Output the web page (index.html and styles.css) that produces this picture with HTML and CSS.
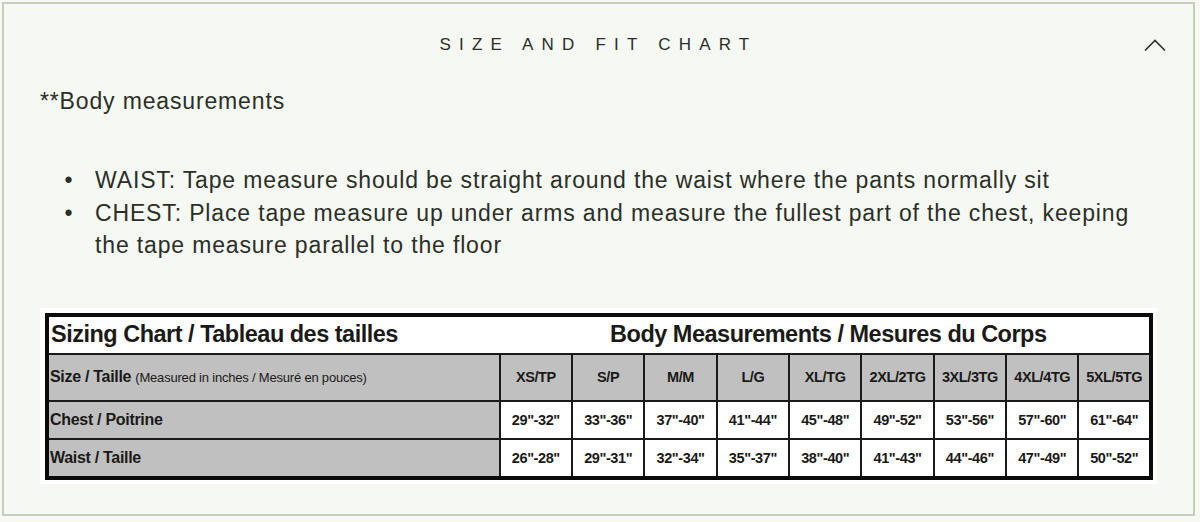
FILE: index.html
```html
<!DOCTYPE html>
<html lang="en">
<head>
<meta charset="utf-8">
<title>Size and fit chart</title>
<link rel="stylesheet" href="styles.css">
</head>
<body>
<section class="panel">
  <header class="panel-head">
    <h2 class="panel-title">SIZE AND FIT CHART</h2>
    <svg class="chevron" width="22" height="12" viewBox="0 0 22 12" aria-hidden="true">
      <path d="M1 11.5 L11 1.5 L21 11.5" fill="none" stroke="#2f332b" stroke-width="1.6"/>
    </svg>
  </header>
  <div class="panel-body">
    <p class="lead">**Body measurements</p>
    <ul class="notes">
      <li>WAIST: Tape measure should be straight around the waist where the pants normally sit</li>
      <li>CHEST: Place tape measure up under arms and measure the fullest part of the chest, keeping the tape measure parallel to the floor</li>
    </ul>
    <div class="chart">
      <table class="sizes">
        <colgroup>
          <col class="c-label">
          <col class="c-size"><col class="c-size"><col class="c-size"><col class="c-size"><col class="c-size"><col class="c-size"><col class="c-size"><col class="c-size"><col class="c-size">
        </colgroup>
        <tr class="r-title">
          <td class="t-left">Sizing Chart / Tableau des tailles</td>
          <td colspan="9" class="t-center">Body Measurements / Mesures du Corps</td>
        </tr>
        <tr class="r-head">
          <td class="lbl"><b>Size / Taille</b> <span class="small">(Measured in inches / Mesuré en pouces)</span></td>
          <td>XS/TP</td><td>S/P</td><td>M/M</td><td>L/G</td><td>XL/TG</td><td>2XL/2TG</td><td>3XL/3TG</td><td>4XL/4TG</td><td>5XL/5TG</td>
        </tr>
        <tr class="r-val">
          <td class="lbl">Chest / Poitrine</td>
          <td>29"-32"</td><td>33"-36"</td><td>37"-40"</td><td>41"-44"</td><td>45"-48"</td><td>49"-52"</td><td>53"-56"</td><td>57"-60"</td><td>61"-64"</td>
        </tr>
        <tr class="r-val r-last">
          <td class="lbl">Waist / Taille</td>
          <td>26"-28"</td><td>29"-31"</td><td>32"-34"</td><td>35"-37"</td><td>38"-40"</td><td>41"-43"</td><td>44"-46"</td><td>47"-49"</td><td>50"-52"</td>
        </tr>
      </table>
    </div>
  </div>
</section>
</body>
</html>
```
FILE: styles.css
```css
html, body {
  margin: 0;
  padding: 0;
  background: #f7f8f4;
}
body {
  padding: 2px 5px 0 2px;
  font-family: "Liberation Sans", Arial, sans-serif;
  color: #2b2f27;
}
.panel {
  border: 2px solid #c6cdbb;
  background: #f6f8f3;
  height: 514px;
  box-sizing: border-box;
}
.panel-head {
  height: 81px;
  display: flex;
  align-items: center;
  justify-content: center;
  position: relative;
}
.panel-title {
  margin: 0;
  font-weight: normal;
  font-size: 17px;
  letter-spacing: 8.2px;
  color: #2b2f27;
}
.chevron {
  position: absolute;
  right: 27px;
  top: 35px;
}
.panel-body {
  padding: 0 36px 0 36px;
}
.lead {
  margin: 0;
  font-size: 23px;
  line-height: 32px;
  letter-spacing: 0.85px;
}
.notes {
  margin: 47px 0 0 0;
  padding-left: 55px;
  font-size: 23px;
  line-height: 32.5px;
  letter-spacing: 0.85px;
}
.notes li::marker {
  content: "\2022\00a0\00a0\00a0";
  font-size: 23px;
}
.chart {
  margin-top: 46px;
  width: 1117px;
  box-sizing: border-box;
  background: #ffffff;
  padding: 5px 4px 4px 5px;
}
.sizes {
  width: 1108px;
  table-layout: fixed;
  border-collapse: collapse;
  border: 4px solid #0a0a0a;
  font-family: "Liberation Sans", Arial, sans-serif;
  font-weight: bold;
  color: #1b1a18;
}
.c-label { width: 451px; }
.c-size { width: 72.1px; }
.sizes td {
  border: 2.5px solid #1a1a1a;
  padding: 0;
  text-align: center;
  font-size: 14.5px;
  letter-spacing: -0.4px;
  white-space: nowrap;
  overflow: hidden;
}
.r-title td {
  background: #ffffff;
  height: 36px;
  font-size: 23.5px;
  letter-spacing: -0.5px;
  border-left: none;
  border-right: none;
  border-top: none;
}
.r-title .t-left {
  text-align: left;
  padding-left: 2px;
}
.r-title .t-center {
  text-align: center;
  padding-left: 8px;
}
.r-head td {
  background: #c0c0c0;
  height: 45px;
}
.r-val td {
  background: #ffffff;
  height: 36px;
}
.r-last td {
  height: 36px;
}
.sizes td.lbl {
  background: #c0c0c0;
  text-align: left;
  padding-left: 1px;
  font-size: 16px;
  letter-spacing: -0.3px;
}
.small {
  font-weight: normal;
  font-size: 13px;
  letter-spacing: -0.2px;
}
```
